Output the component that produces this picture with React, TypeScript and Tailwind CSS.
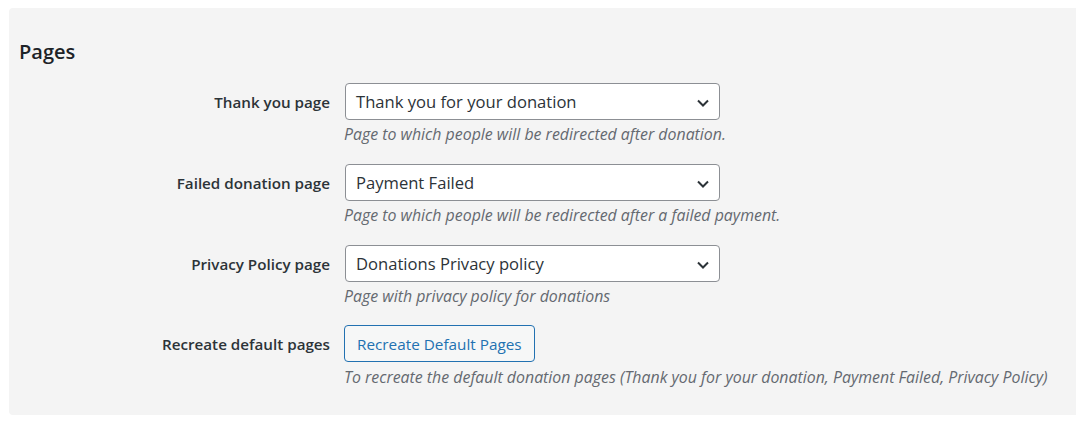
import React from "react";

const font = { fontFamily: '"Open Sans", "Noto Sans", sans-serif' };

function Chevron() {
  return (
    <svg width="16" height="16" viewBox="0 0 16 16" className="text-[#2c3338]">
      <polyline points="3,5.5 8,10.5 13,5.5" fill="none" stroke="currentColor" strokeWidth="2" />
    </svg>
  );
}

function SelectRow({ label, value, desc }: { label: string; value: string; desc: string }) {
  return (
    <div className="flex items-start">
      <div className="w-[326px] shrink-0 pr-[15px] h-[37px] pt-[2px] flex items-center justify-end text-[15.2px] font-semibold text-[#2c3338]">
        {label}
      </div>
      <div>
        <div className="w-[375px] h-[37px] pt-[2px] bg-white border border-[#8c8f94] rounded-[4px] flex items-center justify-between pl-[10px] pr-[8px] text-[16.6px] text-[#2c3338]">
          <span>{value}</span>
          <Chevron />
        </div>
        <p className="mt-[4px] -ml-[1px] text-[15.9px] leading-[20px] italic text-[#646970]">{desc}</p>
      </div>
    </div>
  );
}

export default function App() {
  return (
    <div className="bg-white w-[1076px] h-[422px] pt-[8px] pl-[9px] overflow-hidden" style={font}>
      <div className="bg-[#f4f4f4] rounded-l-[4px] h-[407px] pl-[10px] pt-[30px]">
        <h2 className="text-[20px] font-semibold text-[#1d2327] leading-[28px]">Pages</h2>
        <div className="mt-[17px] flex flex-col gap-[20px]">
          <SelectRow
            label="Thank you page"
            value="Thank you for your donation"
            desc="Page to which people will be redirected after donation."
          />
          <SelectRow
            label="Failed donation page"
            value="Payment Failed"
            desc="Page to which people will be redirected after a failed payment."
          />
          <SelectRow
            label="Privacy Policy page"
            value="Donations Privacy policy"
            desc="Page with privacy policy for donations"
          />
          <div className="flex items-start -mt-[1px]">
            <div className="w-[326px] shrink-0 pr-[15px] h-[37px] pt-[2px] flex items-center justify-end text-[15.2px] font-semibold text-[#2c3338]">
              Recreate default pages
            </div>
            <div className="-ml-[1px]">
              <button className="h-[37px] pt-[2px] px-[12px] border border-[#2271b1] rounded-[4px] bg-[#f6f7f7] text-[#2271b1] text-[15.3px]">
                Recreate Default Pages
              </button>
              <p className="mt-[5px] text-[15.9px] leading-[20px] italic text-[#646970]">
                To recreate the default donation pages (Thank you for your donation, Payment Failed, Privacy Policy)
              </p>
            </div>
          </div>
        </div>
      </div>
    </div>
  );
}
